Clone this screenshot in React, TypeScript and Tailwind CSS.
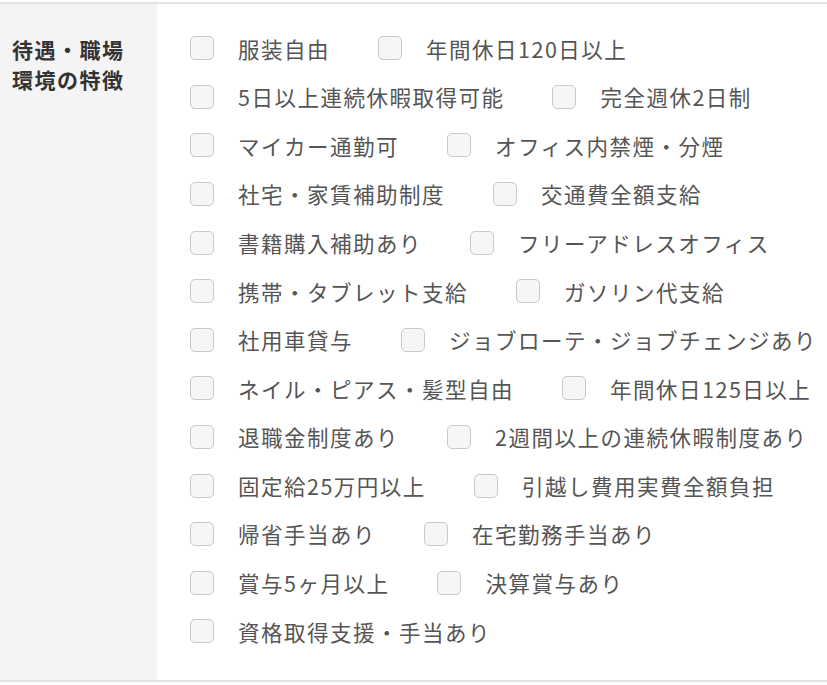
const rows: string[][] = [
  ["服装自由", "年間休日120日以上"],
  ["5日以上連続休暇取得可能", "完全週休2日制"],
  ["マイカー通勤可", "オフィス内禁煙・分煙"],
  ["社宅・家賃補助制度", "交通費全額支給"],
  ["書籍購入補助あり", "フリーアドレスオフィス"],
  ["携帯・タブレット支給", "ガソリン代支給"],
  ["社用車貸与", "ジョブローテ・ジョブチェンジあり"],
  ["ネイル・ピアス・髪型自由", "年間休日125日以上"],
  ["退職金制度あり", "2週間以上の連続休暇制度あり"],
  ["固定給25万円以上", "引越し費用実費全額負担"],
  ["帰省手当あり", "在宅勤務手当あり"],
  ["賞与5ヶ月以上", "決算賞与あり"],
  ["資格取得支援・手当あり"],
]

function Check({ label }: { label: string }) {
  return (
    <label className="flex items-center mr-[48px] cursor-pointer">
      <span className="w-[24px] h-[24px] shrink-0 rounded-[5px] border border-[#c9c9c9] bg-[#f6f6f6]" />
      <span className="ml-[24px] text-[21.5px] tracking-[1.5px] text-[#555] whitespace-nowrap leading-none">
        {label}
      </span>
    </label>
  )
}

export default function App() {
  return (
    <div
      className="w-[827px] h-[685px] bg-white pt-[2px]"
      style={{ fontFamily: '"Noto Sans CJK JP", "Noto Sans", sans-serif' }}
    >
      <div className="flex border-t-2 border-b-2 border-[#e3e3e3] h-[680px]">
        <div className="w-[157px] shrink-0 bg-[#f4f4f4] pl-[12px] pt-[30px]">
          <p className="text-[21px] tracking-[1.5px] leading-[30px] font-bold text-[#333]">
            待遇・職場
            <br />
            環境の特徴
          </p>
        </div>
        <div className="flex-1 pl-[33px] pt-[20px]">
          {rows.map((row, i) => (
            <div key={i} className="flex items-center h-[48.6px]">
              {row.map((item) => (
                <Check key={item} label={item} />
              ))}
            </div>
          ))}
        </div>
      </div>
    </div>
  )
}
